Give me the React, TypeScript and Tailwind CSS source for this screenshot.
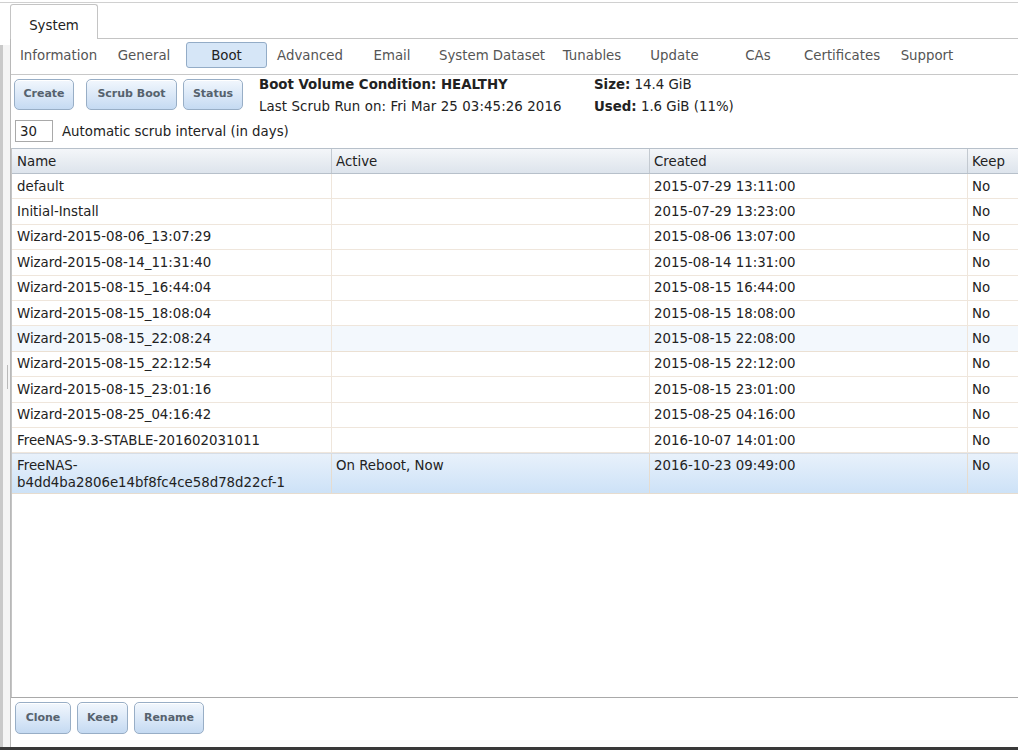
import React from "react";

const tabs: { label: string; w: string; active?: boolean }[] = [
  { label: "Information", w: "w-[87px]" },
  { label: "General", w: "w-[80px]" },
  { label: "Boot", w: "w-[81px]", active: true },
  { label: "Advanced", w: "w-[82px]" },
  { label: "Email", w: "w-[78px]" },
  { label: "System Dataset", w: "w-[118px]" },
  { label: "Tunables", w: "w-[78px]" },
  { label: "Update", w: "w-[83px]" },
  { label: "CAs", w: "w-[80px]" },
  { label: "Certificates", w: "w-[84px]" },
  { label: "Support", w: "w-[82px]" },
];

const rows: [string, string, string][] = [
  ["default", "2015-07-29 13:11:00", "No"],
  ["Initial-Install", "2015-07-29 13:23:00", "No"],
  ["Wizard-2015-08-06_13:07:29", "2015-08-06 13:07:00", "No"],
  ["Wizard-2015-08-14_11:31:40", "2015-08-14 11:31:00", "No"],
  ["Wizard-2015-08-15_16:44:04", "2015-08-15 16:44:00", "No"],
  ["Wizard-2015-08-15_18:08:04", "2015-08-15 18:08:00", "No"],
  ["Wizard-2015-08-15_22:08:24", "2015-08-15 22:08:00", "No"],
  ["Wizard-2015-08-15_22:12:54", "2015-08-15 22:12:00", "No"],
  ["Wizard-2015-08-15_23:01:16", "2015-08-15 23:01:00", "No"],
  ["Wizard-2015-08-25_04:16:42", "2015-08-25 04:16:00", "No"],
  ["FreeNAS-9.3-STABLE-201602031011", "2016-10-07 14:01:00", "No"],
];

function Btn({ label, w, h }: { label: string; w: string; h: string }) {
  return (
    <div
      className={`${w} ${h} shrink-0 rounded-[5px] border border-[#98aec6] bg-linear-to-b from-[#f2f7fd] to-[#c5daf2] shadow-[inset_0_1px_0_#ffffff] flex items-center justify-center text-[11px] font-bold text-[#56626e]`}
    >
      {label}
    </div>
  );
}

export default function App() {
  return (
    <div className="w-[1018px] h-[750px] overflow-hidden bg-white flex flex-col font-['DejaVu_Sans',sans-serif] text-[13.33px] text-[#222]">
      <div className="h-[3px] shrink-0 border-b border-[#d0d0d0]" />
      <div className="flex flex-1 min-h-0">
        {/* left splitter strip */}
        <div className="w-[10px] shrink-0 flex flex-col">
          <div className="h-[42px] shrink-0" />
          <div className="flex-1 flex">
            <div className="w-[3px] bg-[#c9c9c9]" />
            <div className="flex-1 bg-[#f4f4f4]">
              <div className="ml-[4px] mt-[320px] w-[1px] h-[24px] bg-[#b9b9b9]" />
            </div>
          </div>
        </div>

        <div className="flex-1 flex flex-col min-w-0">
          {/* tab strip */}
          <div className="h-[36px] shrink-0 flex">
            <div className="mt-[1px] w-[88px] h-[35px] border border-b-0 border-[#c4c4c4] rounded-t-[3px] bg-white text-center pt-[13px] leading-[16px] text-[#222]">
              System
            </div>
            <div className="flex-1 border-b border-[#c4c4c4]" />
          </div>

          {/* panel */}
          <div className="flex-1 flex flex-col min-h-0 border-l border-[#b8b8b8]">
            {/* nav */}
            <div className="h-[36px] shrink-0 border-b border-[#c8c8c8] flex gap-[2px] pl-[4px] pt-[3px]">
              {tabs.map((t) =>
                t.active ? (
                  <div
                    key={t.label}
                    className={`${t.w} h-[26px] shrink-0 rounded-[3px] border border-[#93acc7] bg-[#d6e6f7] flex items-center justify-center pt-[1px] text-[#222]`}
                  >
                    {t.label}
                  </div>
                ) : (
                  <div
                    key={t.label}
                    className={`${t.w} h-[26px] shrink-0 flex items-center justify-center pt-[1px] text-[#555] whitespace-nowrap`}
                  >
                    {t.label}
                  </div>
                )
              )}
            </div>

            {/* toolbar */}
            <div className="shrink-0 flex flex-col">
              <div className="flex h-[40px]">
                <div className="flex mt-[4px] ml-[3px]">
                  <Btn label="Create" w="w-[60px]" h="h-[31px]" />
                  <div className="ml-[12px]">
                    <Btn label="Scrub Boot" w="w-[91px]" h="h-[31px]" />
                  </div>
                  <div className="ml-[6px]">
                    <Btn label="Status" w="w-[60px]" h="h-[31px]" />
                  </div>
                </div>
                <div className="ml-[16px] w-[335px] flex flex-col">
                  <div className="mt-[1px] h-[18px] leading-[18px] font-bold whitespace-nowrap">
                    Boot Volume Condition: HEALTHY
                  </div>
                  <div className="mt-[4px] h-[18px] leading-[18px] whitespace-nowrap tracking-[0.1px]">
                    Last Scrub Run on: Fri Mar 25 03:45:26 2016
                  </div>
                </div>
                <div className="flex flex-col">
                  <div className="mt-[1px] h-[18px] leading-[18px] whitespace-nowrap">
                    <span className="font-bold">Size:</span> 14.4 GiB
                  </div>
                  <div className="mt-[4px] h-[18px] leading-[18px] whitespace-nowrap">
                    <span className="font-bold">Used:</span> 1.6 GiB (11%)
                  </div>
                </div>
              </div>
              <div className="mt-[5px] h-[22px] flex items-center">
                <div className="ml-[4px] w-[38px] h-[22px] border border-[#a9a9a9] bg-white pl-[4px] pt-[1px] flex items-center">
                  30
                </div>
                <div className="ml-[9px] pt-[1px] whitespace-nowrap">Automatic scrub interval (in days)</div>
              </div>
            </div>

            {/* table */}
            <div className="mt-[6px] flex-1 min-h-0 flex flex-col border-l border-[#c4c4c4] bg-white">
              <div className="h-[26px] shrink-0 grid grid-cols-[320px_318px_318px_1fr] border-t border-b border-[#b7c0ca] bg-linear-to-b from-[#f4f6f9] to-[#dde4ec]">
                <div className="border-r border-[#c3c9d0] pl-[5px] pt-[1px] flex items-center">Name</div>
                <div className="border-r border-[#c3c9d0] pl-[4px] pt-[1px] flex items-center">Active</div>
                <div className="border-r border-[#c3c9d0] pl-[4px] pt-[1px] flex items-center">Created</div>
                <div className="pl-[4px] pt-[1px] flex items-center">Keep</div>
              </div>
              {rows.map((r, i) => (
                <div
                  key={r[0]}
                  className={`h-[25.4px] shrink-0 grid grid-cols-[320px_318px_318px_1fr] border-b ${
                    i === 6 ? "bg-[#f3f8fd] border-[#ebe0d3]" : "bg-white border-[#efe6dc]"
                  }`}
                >
                  <div className="border-r border-[#efe6dc] pl-[5px] pt-[1px] flex items-center whitespace-nowrap">{r[0]}</div>
                  <div className="border-r border-[#efe6dc] pl-[4px] flex items-center"></div>
                  <div className="border-r border-[#efe6dc] pl-[4px] pt-[1px] flex items-center">{r[1]}</div>
                  <div className="pl-[4px] pt-[1px] flex items-center">{r[2]}</div>
                </div>
              ))}
              <div className="h-[41px] shrink-0 grid grid-cols-[320px_318px_318px_1fr] border-t border-b border-t-[#d6dde6] border-b-[#e6dccf] bg-linear-to-b from-[#e8f1fb] to-[#cde2f7]">
                <div className="border-r border-[#e6dccf] pl-[5px] pt-[3px] leading-[17px]">
                  FreeNAS-
                  <br />
                  b4dd4ba2806e14bf8fc4ce58d78d22cf-1
                </div>
                <div className="border-r border-[#e6dccf] pl-[4px] pt-[3px] leading-[17px]">On Reboot, Now</div>
                <div className="border-r border-[#e6dccf] pl-[4px] pt-[3px] leading-[17px]">2016-10-23 09:49:00</div>
                <div className="pl-[4px] pt-[3px] leading-[17px]">No</div>
              </div>
              <div className="flex-1" />
            </div>

            {/* bottom buttons */}
            <div className="h-[50px] shrink-0 border-t border-[#a9a9a9] flex items-start pt-[4px] pl-[4px] gap-[6px]">
              <Btn label="Clone" w="w-[56px]" h="h-[32px]" />
              <Btn label="Keep" w="w-[51px]" h="h-[32px]" />
              <Btn label="Rename" w="w-[70px]" h="h-[32px]" />
            </div>
          </div>
        </div>
      </div>
      <div className="h-[3px] shrink-0 bg-[#3a3a3a]" />
    </div>
  );
}
